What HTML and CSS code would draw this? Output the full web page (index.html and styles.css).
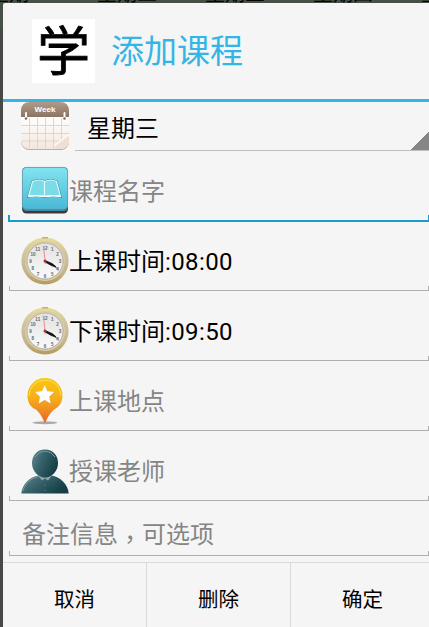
FILE: index.html
```html
<!DOCTYPE html>
<html lang="zh-CN">
<head>
<meta charset="utf-8">
<title>添加课程</title>
<link rel="stylesheet" href="styles.css">
</head>
<body>
<svg class="defs" width="0" height="0" aria-hidden="true">
  <defs>
    <linearGradient id="gold" x2="0" y2="1"><stop offset="0" stop-color="#e9dc96"/><stop offset=".35" stop-color="#cfc3a0"/><stop offset=".75" stop-color="#c5b48a"/><stop offset="1" stop-color="#b39b5c"/></linearGradient>
    <linearGradient id="face" x2="0" y2="1"><stop offset="0" stop-color="#e2e2e2"/><stop offset="1" stop-color="#fafafa"/></linearGradient>
    <symbol id="clock" viewBox="0 0 48 48">
      <circle cx="24" cy="24" r="23.6" fill="url(#gold)"/>
      <circle cx="24" cy="24" r="19.2" fill="none" stroke="#d8cdb0" stroke-width="1.5"/>
      <circle cx="24" cy="24" r="18" fill="url(#face)" stroke="#b8ae96" stroke-width=".9"/>
      <path d="M21 .8h6" stroke="#999983" stroke-width="1"/>
      <g class="numerals">
        <text x="24" y="12.8">12</text><text x="31.2" y="14.2">1</text><text x="36.5" y="19.4">2</text><text x="39" y="26.2">3</text><text x="36.5" y="33.6">4</text><text x="31.4" y="38.8">5</text><text x="24" y="40.8">6</text><text x="17" y="38.6">7</text><text x="11.8" y="33.2">8</text><text x="9.6" y="26.2">9</text><text x="12" y="19.4">10</text><text x="16.8" y="14.2">11</text>
      </g>
      <path d="M24 24l13.500 8" stroke="#777" stroke-width="1.2"/>
      <path d="M23.500 23.200l8 3.600 3.500 3-4.500-1.200-7-4z" fill="#111" stroke="#111" stroke-width=".8"/>
      <path d="M24.400 27L22.400 9" stroke="#ec8b8b" stroke-width="1"/>
      <circle cx="24" cy="24" r="1.5" fill="#a82e35"/>
    </symbol>
  </defs>
</svg>
<div class="backdrop"><span>星期一</span><span>星期二</span><span>星期三</span><span>星期四</span><span>星期五</span></div>
<main class="dialog">
  <header class="header">
    <div class="logo">学</div>
    <h1 class="title">添加课程</h1>
  </header>

  <div class="row row-week">
    <svg class="icon" viewBox="0 0 48 48">
      <defs>
        <linearGradient id="band" x2="0" y2="1"><stop offset="0" stop-color="#b09a88"/><stop offset="1" stop-color="#8a7463"/></linearGradient>
        <linearGradient id="paper" x2="0" y2="1"><stop offset="0" stop-color="#fff"/><stop offset="1" stop-color="#f3e7de"/></linearGradient>
      </defs>
      <path d="M0 0h48v48H0z" fill="#fcfaf8"/>
      <rect y="1" width="48" height="47" rx="8" fill="#c5ab99"/>
      <path d="M0 14h48v24c0 5-3 9-8 9H8c-5 0-8-4-8-9z" fill="url(#paper)"/>
      <path d="M0 15V9q0-9 9-9h30q9 0 9 9v6z" fill="url(#band)"/>
      <path d="M8.500 16v30M16.500 16v30M24.500 16v30M32.500 16v30M40.500 16v26M0 23.500h48M0 31.500h48M1 39h46" fill="none" stroke="#e6d3c5" stroke-width="1"/>
      <path d="M32 46c4-1 6-9 16-12v6c-1 5-5 7-9 7z" fill="#eee0d6"/>
      <path d="M33 44L47 33" stroke="#fffaf5" stroke-width="1.5"/>
      <path d="M5 11v5M43.500 11v5" stroke="#fff" stroke-width="2" stroke-linecap="round"/>
      <circle cx="5" cy="16.500" r="1.300" fill="#806c5e"/><circle cx="43.500" cy="16.500" r="1.300" fill="#806c5e"/>
      <text class="week" x="24" y="10">Week</text>
    </svg>
    <div class="spinner">星期三</div>
  </div>

  <div class="row field focused">
    <svg class="icon" viewBox="0 0 48 48">
      <defs><linearGradient id="cyan" x2="0" y2="1"><stop offset="0" stop-color="#82e4ef"/><stop offset="1" stop-color="#49b9d7"/></linearGradient></defs>
      <rect x="1" y="3" width="46" height="44.500" rx="4.500" fill="#42383a"/>
      <rect x="1" y="1" width="46" height="44" rx="4.500" fill="#338ca8"/>
      <rect x="1.400" y="1.400" width="45.200" height="41.600" rx="4.200" fill="url(#cyan)" stroke="#759fab" stroke-width=".7"/>
      <path d="M7.500 30.500l4-15q7-3 12 0 6-3 12 0l4 15q-8-2-13.500 0h-4q-7-2-14.500 0zM23.500 15v14" fill="none" stroke="#38899f" stroke-width="2.200"/>
      <path d="M7.500 30.500l4-15q7-3 12 0 6-3 12 0l4 15q-8-2-13.500 0h-4q-7-2-14.500 0zM23.500 15v14" fill="#7bdce9" stroke="#e5ffff" stroke-width="1.100"/>
      <path d="M8 30.300q8-1 14 0h4q6-1 13 0" stroke="#fff" stroke-width="1.500" fill="none"/>
    </svg>
    <span class="hint">课程名字</span>
  </div>

  <div class="row field">
    <svg class="icon"><use href="#clock"/></svg>
    <span class="value">上课时间<span class="time">:08:00</span></span>
  </div>

  <div class="row field">
    <svg class="icon"><use href="#clock"/></svg>
    <span class="value">下课时间<span class="time">:09:50</span></span>
  </div>

  <div class="row field">
    <svg class="icon" viewBox="0 0 48 48">
      <defs><linearGradient id="orange" x2="0" y2="1"><stop offset="0" stop-color="#fac80d"/><stop offset=".45" stop-color="#f5ae19"/><stop offset="1" stop-color="#e9632b"/></linearGradient></defs>
      <ellipse cx="24" cy="45.800" rx="12.500" ry="1.500" fill="#a9a9a9"/>
      <path d="M24 46.500c-2-5-4-9-9-14C9 30 6.500 25 6.500 18.500a17.500 17.500 0 0 1 35 0c0 6-2.500 11-8.500 14-5 5-7 9-9 14z" fill="url(#orange)"/>
      <path d="M8 19a16 16 0 0 1 32 0" fill="none" stroke="#ffdc53" stroke-width="1"/>
      <path d="M24.300 8.900l2.700 6 6.600.7-4.900 4.500 1.400 6.500-5.800-3.300-5.800 3.300 1.400-6.500-4.900-4.500 6.600-.7z" fill="#c77824"/>
      <path d="M23.800 8.700l2.600 5.900 6.500.7-4.800 4.400 1.300 6.400-5.600-3.300-5.700 3.300 1.300-6.400-4.800-4.400 6.500-.7z" fill="#fff" stroke="#fff" stroke-width=".6" stroke-linejoin="round"/>
    </svg>
    <span class="hint">上课地点</span>
  </div>

  <div class="row field">
    <svg class="icon" viewBox="0 0 48 48">
      <defs><linearGradient id="teal" x2="1" y2=".5"><stop offset="0" stop-color="#668990"/><stop offset=".45" stop-color="#37636b"/><stop offset="1" stop-color="#153e46"/></linearGradient></defs>
      <path d="M.3 46.500C1 37 9 30 17.500 28.500h13C39 30 47 37 47.700 46.500z" fill="url(#teal)"/>
      <path d="M2 44C4 36 10 31 18 29.500" fill="none" stroke="#8ba5aa" stroke-width=".8"/>
      <path d="M17 28.500l7 2 7-2-4 5-3-2-3 2z" fill="#8da5a9"/>
      <path d="M24 2.500c8 0 13 6 13 13.500 0 8-6 14.500-13 14.500S11 24 11 16C11 8.500 16 2.500 24 2.500z" fill="url(#teal)"/>
      <path d="M14 10q4-6 10-6t10 6" fill="none" stroke="#7899a0" stroke-width="1"/>
      <path d="M24 38v1M24 43v1" stroke="#6c8b90"/>
    </svg>
    <span class="hint">授课老师</span>
  </div>

  <div class="row field note"><span class="hint">备注信息<span class="comma" lang="zh-TW">，</span>可选项</span></div>

  <footer class="actions">
    <button>取消</button><button>删除</button><button>确定</button>
  </footer>
</main>
</body>
</html>
```
FILE: styles.css
```css
* { box-sizing: border-box; }

html, body { height: 100%; overflow: hidden; }

body {
  margin: 0;
  padding: 3px 0 0 3px;
  background: linear-gradient(#465046 0 30px, #484848 30px);
  font-family: Roboto, "Noto Sans CJK SC", sans-serif;
  color: #000;
}

.defs { position: absolute; }

.backdrop {
  position: absolute;
  top: -17px;
  left: -11px;
  width: 440px;
  overflow: hidden;
  display: grid;
  grid-template-columns: repeat(5, 108px);
  font-size: 20px;
  line-height: 22px;
  color: #050505;
  white-space: nowrap;
}

.dialog {
  position: relative;
  width: 426px;
  height: 624px;
  overflow: hidden;
  display: flex;
  flex-direction: column;
  background: #f5f5f5;
  border-top-left-radius: 2px;
}

.header {
  flex: none;
  height: 99px;
  display: flex;
  align-items: flex-start;
  padding: 16px 0 0 29px;
  border-bottom: 3px solid #33b5e5;
}

.logo {
  width: 63px;
  height: 64px;
  background: #fff;
  font-size: 53px;
  line-height: 68px;
  text-align: center;
  -webkit-text-stroke: 0.8px #000;
}

.title {
  margin: 10px 0 0 16px;
  font-size: 33px;
  line-height: 46px;
  font-weight: 400;
  color: #33b5e5;
}

.row {
  flex: none;
  display: flex;
  align-items: flex-start;
  font-size: 24px;
  line-height: 36px;
}

.icon {
  flex: none;
  display: block;
  width: 48px;
  height: 48px;
}

.row-week {
  height: 49px;
  padding-left: 18px;
}

.spinner {
  flex: 1;
  height: 49px;
  margin-left: 6px;
  padding: 9px 0 0 12px;
  border-bottom: 1px solid #bfbfbf;
  background: linear-gradient(135deg, transparent 50%, #868686 50%) right bottom / 18px 18px no-repeat;
}

.field {
  position: relative;
  width: 420px;
  height: 70px;
  margin-left: 6px;
  padding: 16px 0 0 12px;
  border-bottom: 1px solid #b0b0b0;
}

.field::after {
  content: "";
  position: absolute;
  inset: auto 0 0 0;
  height: 4px;
  border: solid #b0b0b0;
  border-width: 0 1px;
}

.field.focused {
  width: 421px;
  height: 71px;
  margin-left: 5px;
  padding: 15px 0 0 13px;
  border-bottom: 2px solid #189ccb;
}

.field.focused::after {
  height: 5px;
  border-color: #189ccb;
  border-width: 0 1px 0 2px;
}

.focused + .field {
  height: 69px;
  padding-top: 15px;
}

.hint { color: #858585; }

.row .hint, .row .value { padding-top: 7px; }

.focused .hint { padding-top: 8px; }

.time { letter-spacing: 0.4px; }

.field.note {
  height: 55px;
  padding: 7px 0 0 13px;
}

.comma {
  position: relative;
  top: 5px;
  font-family: "Noto Sans CJK TC", sans-serif;
}

.actions {
  flex: 1;
  display: grid;
  grid-template-columns: 144px 144px 144px;
  margin-top: 6px;
  border-top: 1px solid #dadada;
}

.actions button {
  margin: 0;
  padding: 9px 0 0 0;
  border: 0;
  border-right: 1px solid #dadada;
  background: none;
  font: 20.5px/30px Roboto, "Noto Sans CJK SC", sans-serif;
  color: #000;
}

.numerals text {
  font: bold 4.6px "Liberation Sans", sans-serif;
  fill: #666;
  text-anchor: middle;
}

.week {
  font: bold 8px "Liberation Sans", sans-serif;
  fill: #fff;
  text-anchor: middle;
}
```
